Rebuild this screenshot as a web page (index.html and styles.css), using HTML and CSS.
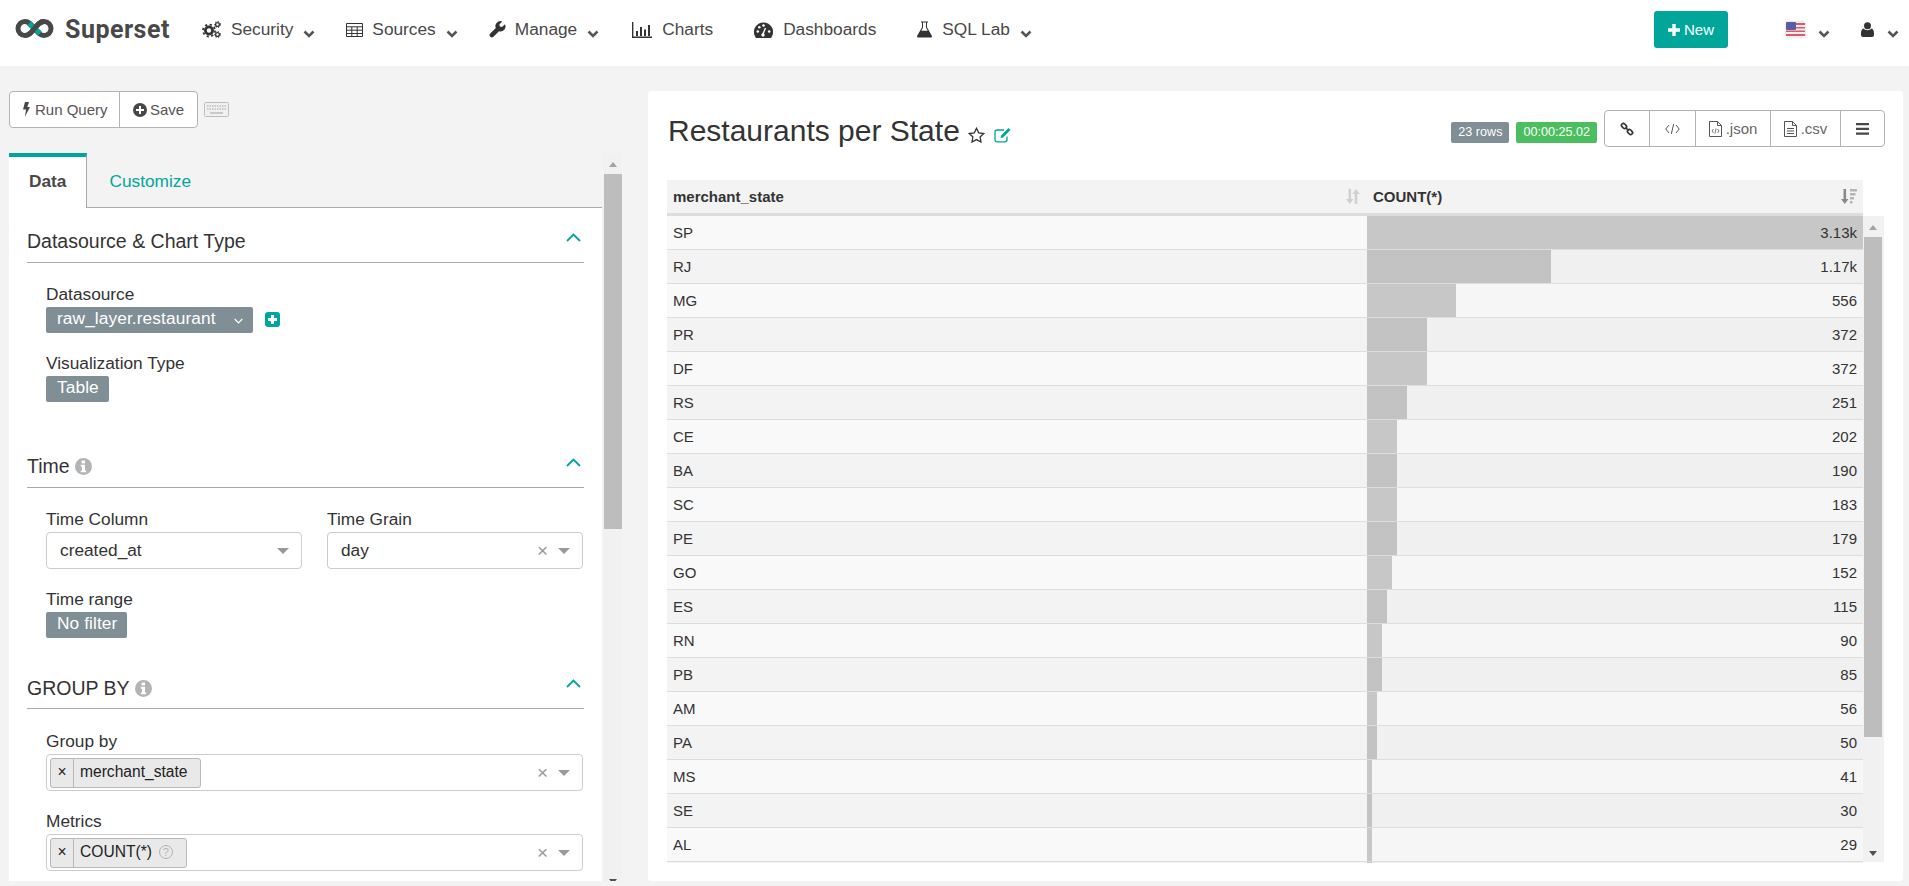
FILE: index.html
```html
<!DOCTYPE html>
<html lang="en">
<head>
    <meta charset="UTF-8">
    <meta name="viewport" content="width=device-width, initial-scale=1.0">
    <title>Restaurants per State - Superset</title>
    <link rel="stylesheet" href="styles.css">
</head>
<body>
    <svg class="sprite" aria-hidden="true">
        <symbol id="chev" viewBox="0 0 12 8"><path d="M1.5 1.5 6 6l4.5-4.5" fill="none" stroke="currentColor" stroke-width="2.6"/></symbol>
        <symbol id="up" viewBox="0 0 15 9"><path d="M1 8l6.5-6.5L14 8" fill="none" stroke="currentColor" stroke-width="1.8"/></symbol>
        <symbol id="info" viewBox="0 0 17 17"><circle cx="8.5" cy="8.5" r="8.5" fill="#b3b3b3"/><rect x="6.6" y="2.6" width="3.4" height="2.8" fill="#fff"/><path d="M5.8 6.8h4.2v5.6h1.2v1.9H5.8v-1.9H7V8.7H5.8z" fill="#fff"/></symbol>
    </svg>

    <nav class="navbar">
        <a class="brand">
            <svg class="brand-logo" viewBox="0 0 39 19">
                <path d="M19.500 9.500C16 5 14 2.500 10 2.500a7 7 0 0 0 0 14c4 0 6-2.500 9.500-7s5.500-7 9.500-7a7 7 0 0 1 0 14c-4 0-6-2.500-9.500-7z" fill="none" stroke="#484848" stroke-width="5"/>
                <path d="M14 4.500l11 10" fill="none" stroke="#00a699" stroke-width="5.500"/>
                <path d="M10 16.500c4 0 6-2.500 9.500-7s5.500-7 9.500-7" fill="none" stroke="#484848" stroke-width="5"/>
            </svg>
            <span>Superset</span>
        </a>
        <a class="nav-item">
            <svg class="icon" width="19" height="17" viewBox="0 0 19 17">
                <circle cx="7" cy="9.500" r="3.600" fill="none" stroke="#333" stroke-width="2.800"/>
                <circle cx="7" cy="9.500" r="6" fill="none" stroke="#333" stroke-width="1.800" stroke-dasharray="2.200 2.500"/>
                <circle cx="15.500" cy="3.500" r="1.900" fill="none" stroke="#333" stroke-width="1.300"/>
                <circle cx="15.500" cy="3.500" r="3" fill="none" stroke="#333" stroke-width="1" stroke-dasharray="1.300 1.500"/>
                <circle cx="15.500" cy="13.500" r="1.900" fill="none" stroke="#333" stroke-width="1.300"/>
                <circle cx="15.500" cy="13.500" r="3" fill="none" stroke="#333" stroke-width="1" stroke-dasharray="1.300 1.500"/>
            </svg>
            <span>Security</span>
            <svg class="chev"><use href="#chev"/></svg>
        </a>
        <a class="nav-item tight">
            <svg class="icon" width="17" height="14" viewBox="0 0 17 14">
                <path d="M.5.5h16v13H.5zM.5 3.800h16M.5 7.200h16M.5 10.500h16M5.800 3.800v9.700M11.200 3.800v9.700" fill="none" stroke="#333"/>
            </svg>
            <span>Sources</span>
            <svg class="chev"><use href="#chev"/></svg>
        </a>
        <a class="nav-item tight">
            <svg class="icon" width="17" height="17" viewBox="0 0 17 17">
                <path d="M16 3.200l-3 2.900-2.100-.6-.6-2.100L13.200.5a5 5 0 0 0-6.400 6.600L1 12.800A2.300 2.300 0 0 0 4.200 16l5.800-5.800A5 5 0 0 0 16 3.200z" fill="#333"/>
            </svg>
            <span>Manage</span>
            <svg class="chev"><use href="#chev"/></svg>
        </a>
        <a class="nav-item plain nav-charts">
            <svg class="icon" width="20" height="16" viewBox="0 0 20 16">
                <path d="M.7 0v15.300H20" fill="none" stroke="#333" stroke-width="1.400"/>
                <path d="M4 9h2v5H4zM8 5h2v9H8zM12 7.500h2V14h-2zM16 3h2v11h-2z" fill="#333"/>
            </svg>
            <span>Charts</span>
        </a>
        <a class="nav-item plain">
            <svg class="icon" width="19" height="16" viewBox="0 0 19 16">
                <path d="M9.500.5A9.500 9.500 0 0 0 1.400 15l.6 1h15l.6-1A9.500 9.500 0 0 0 9.500.5z" fill="#333"/>
                <circle cx="3.800" cy="9.500" r="1.300" fill="#fff"/>
                <circle cx="5.300" cy="5.300" r="1.300" fill="#fff"/>
                <circle cx="9.500" cy="3.500" r="1.300" fill="#fff"/>
                <circle cx="15.200" cy="9.500" r="1.300" fill="#fff"/>
                <path d="M8.500 13l3-7" stroke="#fff" stroke-width="1.400"/>
                <circle cx="9" cy="13" r="1.700" fill="#fff"/>
            </svg>
            <span>Dashboards</span>
        </a>
        <a class="nav-item">
            <svg class="icon" width="15" height="17" viewBox="0 0 15 17">
                <path d="M4 .5h7v1h-1v4.700l4.800 8.600a1.200 1.200 0 0 1-1 1.700H1.200a1.200 1.200 0 0 1-1-1.700L5 6.200V1.500H4z" fill="#333"/>
                <path d="M6 1.500h3v5l1.700 3.200H4.300L6 6.500z" fill="#fff"/>
            </svg>
            <span>SQL Lab</span>
            <svg class="chev"><use href="#chev"/></svg>
        </a>

        <div class="nav-right">
            <button class="btn-new">
                <svg width="12" height="12" viewBox="0 0 12 12"><path d="M4.300 0h3.400v4.300H12v3.400H7.700V12H4.300V7.700H0V4.300h4.300z" fill="#fff"/></svg>
                <span>New</span>
            </button>
            <svg class="flag" width="19" height="15" viewBox="0 0 19 15">
                <rect width="19" height="15" rx="1" fill="#f4f0f2"/>
                <path d="M0 1h19v2H0zM0 5h19v1.500H0zM0 8.500h19V10H0zM0 12h19v2H0z" fill="#d95b66"/>
                <rect width="10" height="8" rx="1" fill="#5a5ca6"/>
            </svg>
            <svg class="chev chev-flag"><use href="#chev"/></svg>
            <svg class="user" width="13" height="15" viewBox="0 0 13 15">
                <circle cx="6.500" cy="3.700" r="3.500" fill="#333"/>
                <path d="M2.500 6.500c1 1.300 2.500 1.700 4 1.700s3-.4 4-1.700c1.500.4 2.500 2 2.500 5V13a2 2 0 0 1-2 2H2a2 2 0 0 1-2-2v-1.500c0-3 1-4.600 2.500-5z" fill="#333"/>
            </svg>
            <svg class="chev chev-user"><use href="#chev"/></svg>
        </div>
    </nav>

    <main class="explore">
        <section class="controls-col">
            <div class="toolbar">
                <div class="btn-group">
                    <button class="btn btn-run">
                        <svg width="7" height="15" viewBox="0 0 7 15"><path d="M2 0h4L4.300 5H7L1.800 15l1.300-7.500H0z" fill="#484848"/></svg>
                        <span>Run Query</span>
                    </button>
                    <button class="btn btn-save">
                        <svg width="14" height="14" viewBox="0 0 14 14"><circle cx="7" cy="7" r="7" fill="#484848"/><path d="M6 3h2v3h3v2H8v3H6V8H3V6h3z" fill="#fff"/></svg>
                        <span>Save</span>
                    </button>
                </div>
                <svg class="keyboard" width="25" height="15" viewBox="0 0 25 15">
                    <rect x=".5" y=".5" width="24" height="14" rx="1" fill="#f0f0f0" stroke="#bdbdbd"/>
                    <path d="M3 4h19M3 7h19" stroke="#bdbdbd" stroke-width="1.500" stroke-dasharray="1.500 1"/>
                    <path d="M6 11h13" stroke="#bdbdbd" stroke-width="1.500"/>
                </svg>
            </div>

            <div class="controls-wrap">
                <div class="controls-panel">
                    <div class="tabs">
                        <a class="tab active">Data</a>
                        <a class="tab">Customize</a>
                    </div>

                    <div class="section section-first">
                        <div class="section-head">
                            <span class="section-title">Datasource &amp; Chart Type</span>
                            <svg class="collapse"><use href="#up"/></svg>
                        </div>
                        <div class="section-body">
                            <div class="control">
                                <div class="control-label">Datasource</div>
                                <div class="chip-row">
                                    <span class="chip">raw_layer.restaurant
                                        <svg class="chip-caret" width="9" height="6" viewBox="0 0 9 6"><path d="M.7 1l3.800 3.800L8.300 1" fill="none" stroke="#fff" stroke-width="1.200"/></svg>
                                    </span>
                                    <svg class="add-square" width="15" height="15" viewBox="0 0 15 15"><rect width="15" height="15" rx="3" fill="#00a699"/><path d="M6 3h3v3h3v3H9v3H6V9H3V6h3z" fill="#fff"/></svg>
                                </div>
                            </div>
                            <div class="control">
                                <div class="control-label">Visualization Type</div>
                                <div class="chip-row"><span class="chip">Table</span></div>
                            </div>
                        </div>
                    </div>

                    <div class="section section-time">
                        <div class="section-head">
                            <span class="section-title">Time <svg class="info"><use href="#info"/></svg></span>
                            <svg class="collapse"><use href="#up"/></svg>
                        </div>
                        <div class="section-body">
                            <div class="control-grid">
                                <div class="control">
                                    <div class="control-label">Time Column</div>
                                    <div class="select">
                                        <span class="select-value">created_at</span>
                                        <span class="select-arrow"></span>
                                    </div>
                                </div>
                                <div class="control">
                                    <div class="control-label">Time Grain</div>
                                    <div class="select">
                                        <span class="select-value">day</span>
                                        <span class="select-clear">×</span>
                                        <span class="select-arrow"></span>
                                    </div>
                                </div>
                            </div>
                            <div class="control">
                                <div class="control-label">Time range</div>
                                <div class="chip-row"><span class="chip">No filter</span></div>
                            </div>
                        </div>
                    </div>

                    <div class="section section-group">
                        <div class="section-head">
                            <span class="section-title">GROUP BY <svg class="info"><use href="#info"/></svg></span>
                            <svg class="collapse"><use href="#up"/></svg>
                        </div>
                        <div class="section-body">
                            <div class="control">
                                <div class="control-label">Group by</div>
                                <div class="select select-multi">
                                    <span class="tag"><span class="tag-x">×</span><span class="tag-label">merchant_state</span></span>
                                    <span class="select-clear">×</span>
                                    <span class="select-arrow"></span>
                                </div>
                            </div>
                            <div class="control">
                                <div class="control-label">Metrics</div>
                                <div class="select select-multi">
                                    <span class="tag"><span class="tag-x">×</span><span class="tag-label">COUNT(*)<span class="tag-help">?</span></span></span>
                                    <span class="select-clear">×</span>
                                    <span class="select-arrow"></span>
                                </div>
                            </div>
                        </div>
                    </div>
                </div>

                <div class="scrollbar scrollbar-left">
                    <span class="scroll-up"></span>
                    <div class="scroll-thumb"></div>
                    <span class="scroll-down"></span>
                </div>
            </div>
        </section>

        <section class="chart-panel">
            <div class="chart-head">
                <h1 class="chart-title">Restaurants per State</h1>
                <svg class="star" width="17" height="16" viewBox="0 0 17 16"><path d="M8.500 1.300l2.200 4.500 5 .7-3.600 3.500.9 5-4.500-2.400L4 15l.9-5L1.300 6.500l5-.7z" fill="none" stroke="#333" stroke-width="1.300"/></svg>
                <svg class="edit" width="19" height="16" viewBox="0 0 19 16">
                    <path d="M13 9.500v3.300a2 2 0 0 1-2 2H3a2 2 0 0 1-2-2V5a2 2 0 0 1 2-2h7" fill="none" stroke="#00a699" stroke-width="1.300"/>
                    <path d="M6.500 11l.6-2.600L14.500 1l2 2-7.400 7.400z" fill="#00a699"/>
                </svg>
                <div class="chart-actions">
                    <span class="badge badge-rows">23 rows</span>
                    <span class="badge badge-time">00:00:25.02</span>
                    <div class="action-group">
                        <a class="action action-link">
                            <svg width="14" height="14" viewBox="0 0 14 14"><g fill="none" stroke="#333" stroke-width="1.700"><rect x="-2.800" y="-1.900" width="5.600" height="3.800" rx="1.900" transform="translate(4 4) rotate(45)"/><rect x="-2.800" y="-1.900" width="5.600" height="3.800" rx="1.900" transform="translate(10 10) rotate(45)"/><path d="M5.500 5.500l3 3"/></g></svg>
                        </a>
                        <a class="action action-code">
                            <svg width="15" height="12" viewBox="0 0 15 12"><path d="M4 2L.8 6 4 10M11 2l3.200 4L11 10M8.700 1L6.300 11" fill="none" stroke="#555" stroke-width="1"/></svg>
                        </a>
                        <a class="action action-json">
                            <svg width="13" height="16" viewBox="0 0 13 16"><path d="M.5.500h8l4 4v11H.5zM8.500.500v4h4" fill="none" stroke="#555"/><path d="M4.500 8L3 10l1.500 2M8.500 8L10 10l-1.500 2M7 7.500L6 12.500" fill="none" stroke="#555" stroke-width=".8"/></svg>
                            <span>.json</span>
                        </a>
                        <a class="action action-csv">
                            <svg width="13" height="16" viewBox="0 0 13 16"><path d="M.5.500h8l4 4v11H.5zM8.500.500v4h4M3 7.500h7M3 10h7M3 12.500h7" fill="none" stroke="#555"/></svg>
                            <span>.csv</span>
                        </a>
                        <a class="action action-menu">
                            <svg width="13" height="12" viewBox="0 0 13 12"><path d="M0 0h13v2.200H0zM0 4.800h13V7H0zM0 9.600h13v2.200H0z" fill="#484848"/></svg>
                        </a>
                    </div>
                </div>
            </div>

            <div class="data-table">
                <div class="table-head">
                    <div class="th th-state">
                        <span>merchant_state</span>
                        <svg width="15" height="15" viewBox="0 0 15 15"><path d="M2.500 0h2.600v10H7.500L3.800 15 0 10h2.500zM10 0l3.800 5h-2.500v10H8.700V5H6.300z" fill="#d0d0d0"/></svg>
                    </div>
                    <div class="th th-count">
                        <span>COUNT(*)</span>
                        <svg width="16" height="15" viewBox="0 0 16 15"><path d="M2.500 0h2.600v10H7.500L3.800 15 0 10h2.500z" fill="#8a8a8a"/><path d="M9 0h7v2.500H9zM9 4h5.500v2.500H9zM9 8h4v2.500H9zM9 12h2.500v2.500H9z" fill="#b5b5b5"/></svg>
                    </div>
                </div>
                <div class="table-scroll">
                    <table class="rows">
                        <tbody>
                            <tr><td>SP</td><td class="bar-cell" style="--pct:100%">3.13k</td></tr>
                            <tr><td>RJ</td><td class="bar-cell" style="--pct:37%">1.17k</td></tr>
                            <tr><td>MG</td><td class="bar-cell" style="--pct:18%">556</td></tr>
                            <tr><td>PR</td><td class="bar-cell" style="--pct:12%">372</td></tr>
                            <tr><td>DF</td><td class="bar-cell" style="--pct:12%">372</td></tr>
                            <tr><td>RS</td><td class="bar-cell" style="--pct:8%">251</td></tr>
                            <tr><td>CE</td><td class="bar-cell" style="--pct:6%">202</td></tr>
                            <tr><td>BA</td><td class="bar-cell" style="--pct:6%">190</td></tr>
                            <tr><td>SC</td><td class="bar-cell" style="--pct:6%">183</td></tr>
                            <tr><td>PE</td><td class="bar-cell" style="--pct:6%">179</td></tr>
                            <tr><td>GO</td><td class="bar-cell" style="--pct:5%">152</td></tr>
                            <tr><td>ES</td><td class="bar-cell" style="--pct:4%">115</td></tr>
                            <tr><td>RN</td><td class="bar-cell" style="--pct:3%">90</td></tr>
                            <tr><td>PB</td><td class="bar-cell" style="--pct:3%">85</td></tr>
                            <tr><td>AM</td><td class="bar-cell" style="--pct:2%">56</td></tr>
                            <tr><td>PA</td><td class="bar-cell" style="--pct:2%">50</td></tr>
                            <tr><td>MS</td><td class="bar-cell" style="--pct:1%">41</td></tr>
                            <tr><td>SE</td><td class="bar-cell" style="--pct:1%">30</td></tr>
                            <tr><td>AL</td><td class="bar-cell" style="--pct:1%">29</td></tr>
                            <tr><td></td><td class="bar-cell" style="--pct:1%"></td></tr>
                        </tbody>
                    </table>
                    <div class="scrollbar scrollbar-table">
                        <span class="scroll-up"></span>
                        <div class="scroll-thumb"></div>
                        <span class="scroll-down"></span>
                    </div>
                </div>
            </div>
        </section>
    </main>
</body>
</html>
```

FILE: styles.css
```css
:root {
    --teal: #00a699;
    --text: #484848;
    --dark: #333;
    --page: #f3f3f3;
    --chip: #808e95;
    --line: #b3b3b3;
}

* {
    box-sizing: border-box;
}

html, body {
    height: 100%;
}

body {
    margin: 0;
    height: 886px;
    overflow: hidden;
    background-color: var(--page);
    color: var(--dark);
    font-family: "Liberation Sans", Arial, sans-serif;
    font-size: 17.3px;
}

svg {
    display: block;
    flex: none;
}

.sprite {
    display: none;
}

/* Top navigation */
.navbar {
    display: flex;
    align-items: center;
    height: 66px;
    padding: 0 10px 7px 15px;
    background: white;
    color: var(--text);
}

.brand {
    display: flex;
    align-items: center;
    gap: 11px;
    margin-right: 1px;
    font-family: Roboto, "Liberation Sans", sans-serif;
    font-size: 25px;
    font-weight: bold;
    letter-spacing: 0.5px;
}

.brand-logo {
    width: 39px;
    height: 19px;
    margin-top: -3px;
}

.nav-item {
    display: flex;
    align-items: center;
    gap: 10px;
    margin-left: 31px;
}

.nav-item.tight {
    gap: 9px;
}

.nav-item.tight .chev {
    margin-left: 1px;
}

.nav-item.plain {
    padding-right: 10px;
}

.nav-charts {
    margin-left: 33px;
}

.chev {
    width: 12px;
    height: 8px;
    margin-top: 8px;
    color: #555;
}

.nav-right {
    display: flex;
    align-items: center;
    margin-left: auto;
}

.btn-new {
    display: flex;
    align-items: center;
    justify-content: center;
    gap: 4px;
    width: 74px;
    height: 37px;
    padding: 0;
    border: none;
    border-radius: 3px;
    background: var(--teal);
    color: white;
    font-family: inherit;
    font-size: 15px;
}

.flag {
    margin-left: 58px;
    box-shadow: 0 0 2px rgba(0,0,0,0.25);
}

.chev-flag {
    margin-left: 13px;
}

.user {
    margin-left: 31px;
}

.chev-user {
    margin-left: 13px;
}

/* Page body */
.explore {
    display: flex;
    padding: 25px 0 0 9px;
}

.controls-col {
    width: 613px;
    flex: none;
}

.toolbar {
    display: flex;
    align-items: center;
    gap: 6px;
    height: 37px;
    margin-bottom: 25px;
}

.btn-group {
    display: flex;
    height: 37px;
    border: 1px solid var(--line);
    border-radius: 4px;
    background: white;
}

.btn {
    display: flex;
    align-items: center;
    gap: 5px;
    padding: 0 0 0 13px;
    border: none;
    background: none;
    color: #555;
    font-family: inherit;
    font-size: 15px;
    white-space: nowrap;
}

.btn-run {
    width: 110px;
    border-right: 1px solid var(--line);
}

.btn-save {
    width: 77px;
    gap: 3px;
}

.controls-wrap {
    display: flex;
    gap: 1px;
    height: 728px;
    overflow: hidden;
}

.controls-panel {
    width: 593px;
    flex: none;
}

.tabs {
    display: flex;
    height: 55px;
    border-bottom: 1px solid #aaa;
    font-size: 17.3px;
}

.tab {
    padding: 0 20px 0 22px;
    line-height: 56px;
    color: var(--teal);
}

.tab.active {
    height: 55px;
    padding: 0 20px;
    background: white;
    border-top: 4px solid var(--teal);
    border-right: 1px solid #aaa;
    color: var(--text);
    font-weight: bold;
    line-height: 48px;
}

.section {
    padding: 12px 18px 16px;
    background: white;
}

.section-first {
    padding-bottom: 31px;
}

.section-head {
    display: flex;
    align-items: center;
    justify-content: space-between;
    height: 43px;
    border-bottom: 1px solid #aaa;
}

.section-title {
    display: flex;
    align-items: center;
    gap: 5px;
    font-size: 19.5px;
}

.section-group .section-title {
    padding-top: 2px;
}

.section-group .section-body {
    padding-top: 20px;
}

.info {
    width: 17px;
    height: 17px;
}

.collapse {
    width: 15px;
    height: 9px;
    margin: -7px 3px 0 0;
    color: var(--teal);
}

.section-body {
    display: flex;
    flex-direction: column;
    gap: 18px;
    padding: 19px 1px 0 19px;
}

.control-grid {
    display: grid;
    grid-template-columns: 256px 256px;
    gap: 25px;
}

.control-label {
    height: 25px;
    line-height: 25px;
}

.chip-row {
    display: flex;
    align-items: center;
    gap: 12px;
}

.chip {
    display: inline-flex;
    align-items: center;
    gap: 18px;
    height: 26px;
    padding: 0 10px 3px 11px;
    border-radius: 2px;
    background: var(--chip);
    color: white;
    letter-spacing: 0.1px;
}

.chip-caret {
    margin-top: 4px;
}

.add-square {
    margin-top: -2px;
}

.select {
    display: flex;
    align-items: center;
    height: 37px;
    padding: 0 12px 0 13px;
    border: 1px solid #ccc;
    border-radius: 4px;
    background: white;
}

.select-multi {
    padding-left: 3px;
}

.select-value {
    flex: 1;
}

.select-clear {
    margin-left: auto;
    margin-right: 10px;
    color: #999;
    font-size: 19px;
    line-height: 1;
}

.select-arrow {
    width: 0;
    height: 0;
    border-style: solid;
    border-width: 6px 6.5px 0;
    border-color: #999 transparent transparent;
}

.tag {
    display: flex;
    height: 30px;
    border: 1px solid #b8b8b8;
    border-radius: 3px;
    background: #e9e9e9;
    font-size: 15.6px;
    line-height: 26px;
    color: #222;
}

.tag-x {
    width: 23px;
    border-right: 1px solid #b8b8b8;
    text-align: center;
}

.tag-label {
    display: flex;
    align-items: center;
    gap: 7px;
    padding: 0 13px 2px 6px;
}

.tag-help {
    width: 14px;
    height: 14px;
    border: 1px solid #b3b3b3;
    border-radius: 50%;
    color: #b3b3b3;
    font-size: 11px;
    line-height: 12px;
    text-align: center;
}

/* Scrollbars */
.scrollbar {
    display: flex;
    flex-direction: column;
    background: #f1f1f1;
}

.scrollbar-left {
    width: 19px;
    height: 100%;
    padding-left: 1px;
}

.scrollbar-left .scroll-thumb {
    height: 355px;
}

.scroll-up {
    flex: none;
    height: 21px;
    position: relative;
}

.scroll-up::after,
.scroll-down::after {
    content: "";
    position: absolute;
    left: calc(50% - 4px);
    border-style: solid;
    border-color: transparent;
}

.scroll-up::after {
    top: 9px;
    border-width: 0 4.5px 5px;
    border-bottom-color: #a3a3a3;
}

.scroll-down::after {
    bottom: 6px;
    border-width: 5px 4.5px 0;
    border-top-color: #505050;
}

.scroll-thumb {
    flex: none;
    background: #bdbdbd;
}

.scroll-down {
    position: relative;
    flex: 1;
}

.scrollbar-left .scroll-down::after {
    bottom: -3px;
}

/* Chart side */
.chart-panel {
    width: 1255px;
    height: 790px;
    flex: none;
    margin-left: 26px;
    padding: 19px 19px 0;
    border-radius: 3px;
    background: white;
}

.chart-head {
    display: flex;
    height: 70px;
}

.chart-title {
    margin: 1px 8px 0 1px;
    font-size: 30px;
    font-weight: normal;
    line-height: 40px;
}

.star {
    margin: 17px 9px 0 0;
}

.edit {
    margin-top: 17px;
}

.chart-actions {
    display: flex;
    margin: 0 -1px 0 auto;
    gap: 7px;
}

.badge {
    height: 21px;
    margin-top: 12px;
    padding: 0 7px;
    border-radius: 2px;
    color: white;
    font-size: 12.6px;
    line-height: 21px;
}

.badge-rows {
    background: var(--chip);
}

.badge-time {
    background: #4bbf5f;
}

.action-group {
    display: flex;
    height: 37px;
    border: 1px solid var(--line);
    border-radius: 4px;
    color: #666;
    font-size: 15px;
}

.action {
    display: flex;
    align-items: center;
    justify-content: center;
    gap: 4px;
    border-right: 1px solid var(--line);
}

.action-link { width: 45px; }
.action-code { width: 46px; }
.action-json { width: 75px; }
.action-csv { width: 70px; }
.action-menu { width: 43px; border-right: none; }

.table-head {
    display: grid;
    grid-template-columns: 700px 496px;
    width: 1196px;
    height: 36px;
    background: var(--page);
    border-bottom: 3px solid #ddd;
    font-size: 15px;
    font-weight: bold;
}

.th {
    display: flex;
    align-items: center;
    justify-content: space-between;
    padding: 0 6px;
}

.table-scroll {
    display: flex;
    height: 647px;
    overflow: hidden;
}

.rows {
    width: 1196px;
    height: fit-content;
    flex: none;
    table-layout: fixed;
    border-collapse: separate;
    border-spacing: 0;
    font-size: 15px;
}

.rows td {
    height: 34px;
    padding: 0 6px;
    border-bottom: 1px solid #ddd;
}

.rows td:first-child {
    width: 700px;
}

.rows tr:nth-child(odd) {
    background: #f9f9f9;
}

.rows tr:nth-child(even) {
    background: #f3f3f3;
}

.bar-cell {
    text-align: right;
    background-image: linear-gradient(to right, rgba(0,0,0,0.2) var(--pct), rgba(0,0,0,0.01) var(--pct));
}

.scrollbar-table {
    width: 21px;
    flex: none;
    height: 646px;
    padding: 0 2px 0 1px;
}

.scrollbar-table .scroll-thumb {
    height: 500px;
}
```
